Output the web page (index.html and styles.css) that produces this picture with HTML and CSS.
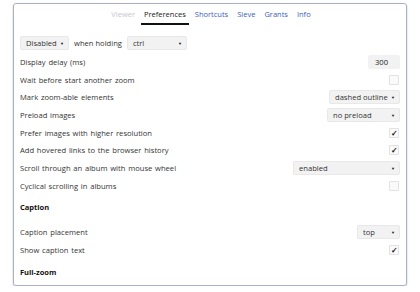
FILE: index.html
```html
<!DOCTYPE html>
<html lang="en">
<head>
  <meta charset="UTF-8" />
  <title>Preferences</title>
  <link rel="stylesheet" href="styles.css">
</head>
<body>
  <div class="panel">
    <nav class="tabs">
      <span class="tab muted">Viewer</span>
      <span class="tab active">Preferences</span>
      <span class="tab">Shortcuts</span>
      <span class="tab">Sieve</span>
      <span class="tab">Grants</span>
      <span class="tab">Info</span>
    </nav>

    <div class="holding">
      <div class="select sel-disabled">Disabled <span class="arrow">&#9660;</span></div>
      <span class="holding-label">when holding</span>
      <div class="select sel-ctrl">ctrl <span class="arrow">&#9660;</span></div>
    </div>

    <div class="rows">
      <div class="row">
        <span>Display delay (ms)</span>
        <div class="number">300</div>
      </div>
      <div class="row">
        <span>Wait before start another zoom</span>
        <div class="check"></div>
      </div>
      <div class="row">
        <span>Mark zoom-able elements</span>
        <div class="select sel-outline">dashed outline <span class="arrow">&#9660;</span></div>
      </div>
      <div class="row">
        <span>Preload images</span>
        <div class="select sel-preload">no preload <span class="arrow">&#9660;</span></div>
      </div>
      <div class="row">
        <span>Prefer images with higher resolution</span>
        <div class="check on">&#10003;</div>
      </div>
      <div class="row">
        <span>Add hovered links to the browser history</span>
        <div class="check on">&#10003;</div>
      </div>
      <div class="row">
        <span>Scroll through an album with mouse wheel</span>
        <div class="select sel-wheel">enabled <span class="arrow">&#9660;</span></div>
      </div>
      <div class="row">
        <span>Cyclical scrolling in albums</span>
        <div class="check"></div>
      </div>
    </div>

    <h3 class="section caption-head">Caption</h3>

    <div class="rows caption-rows">
      <div class="row">
        <span>Caption placement</span>
        <div class="select sel-top">top <span class="arrow">&#9660;</span></div>
      </div>
      <div class="row">
        <span>Show caption text</span>
        <div class="check on">&#10003;</div>
      </div>
    </div>

    <h3 class="section zoom-head">Full-zoom</h3>
  </div>
</body>
</html>
```

FILE: styles.css
```css
* {
  box-sizing: border-box;
  font-family: 'Open Sans', 'Liberation Sans', sans-serif;
}

body {
  margin: 0;
  background: #fff;
  padding: 3px 13px 0 13px;
  color: #333;
  font-size: 7.6px;
}

.panel {
  width: 394px;
  height: 283px;
  border: 1px solid #a9b2c4;
  border-radius: 3px;
  box-shadow: 0 1px 2px rgba(0,0,0,0.25);
  padding: 0 6px 0 6px;
  overflow: hidden;
}

/* tabs */

.tabs {
  display: flex;
  justify-content: center;
  gap: 9px;
  padding-top: 5px;
  padding-left: 2px;
  height: 21px;
  font-size: 7.5px;
}

.tab {
  color: #3a5ec0;
  line-height: 10px;
  padding: 0 0 4px 0;
}

.tab.muted {
  color: #c4c8cf;
}

.tab.active {
  color: #222;
  border-bottom: 2px solid #111;
  padding: 0 3px 4px 3px;
  margin: 0 -3px;
}

/* when holding */

.holding {
  display: flex;
  align-items: center;
  gap: 3px;
  margin-top: 11px;
  height: 14px;
}

.holding-label {
  color: #333;
  margin: 0 2px;
}

.select {
  position: relative;
  height: 14px;
  line-height: 13px;
  padding: 0 5px;
  background: #f2f2f2;
  border: 1px solid #e8e8e8;
  border-radius: 2px;
  color: #333;
  white-space: nowrap;
}

.select .arrow {
  position: absolute;
  right: 4px;
  top: 0;
  font-size: 4px;
  color: #111;
}

.sel-disabled { width: 49px; }
.sel-ctrl { width: 60px; }
.sel-outline { width: 71px; }
.sel-preload { width: 73px; }
.sel-wheel { width: 107px; }
.sel-top { width: 43px; }

/* rows */

.rows {
  margin-top: 3px;
}

.row {
  display: flex;
  justify-content: space-between;
  align-items: center;
  height: 17.7px;
  color: #333;
}

.row > span {
  word-spacing: 0.8px;
}

.number {
  width: 32px;
  height: 14px;
  line-height: 14px;
  background: #f2f2f2;
  border-radius: 2px;
  text-align: right;
  padding-right: 12px;
  color: #222;
}

.check {
  width: 10px;
  height: 10px;
  margin-right: 1px;
  border: 1px solid #e2e2e2;
  background: #fafafa;
  border-radius: 1px;
  font-size: 8px;
  font-weight: bold;
  line-height: 8px;
  text-align: center;
  color: #111;
}

.section {
  margin: 0;
  font-size: 7.5px;
  font-weight: bold;
  color: #111;
  height: 18px;
  line-height: 18px;
}

.caption-head {
  margin-top: 3px;
}

.caption-rows {
  margin-top: 8px;
}

.zoom-head {
  margin-top: 4px;
}
```
